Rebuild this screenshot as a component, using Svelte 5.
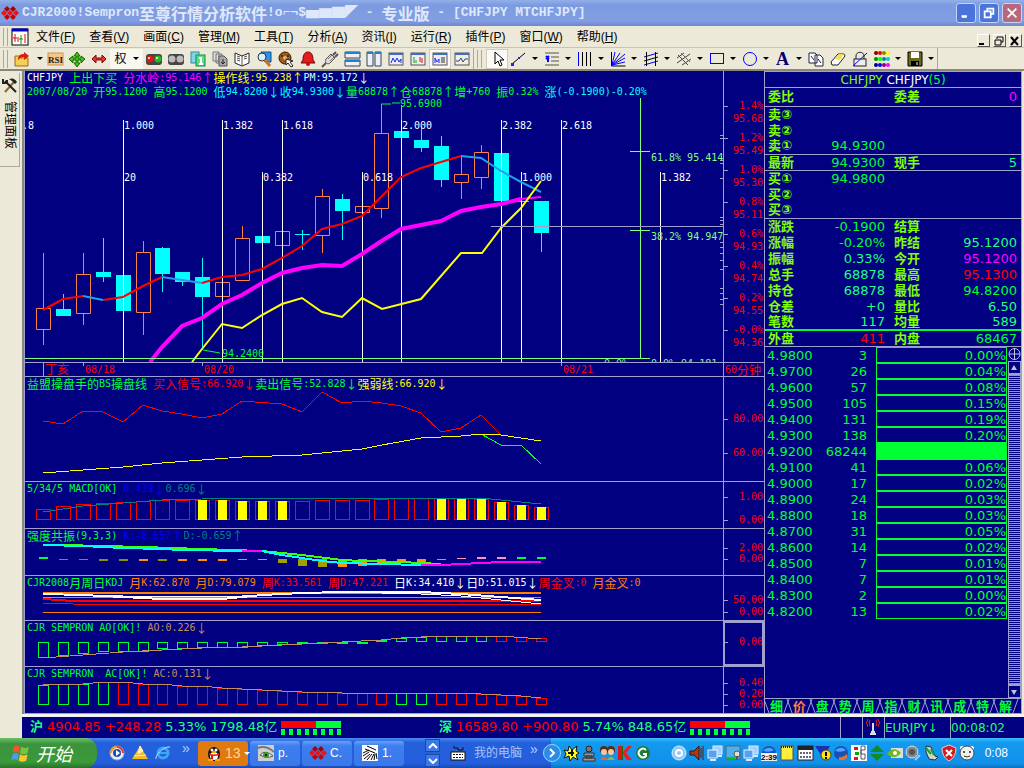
<script>
  // split a label into wide (CJK, arrows) and narrow runs, they use different fonts
  function runs(s) {
    return s.match(/[\u2190-\u21ff\u2e80-\uffef]+|[^\u2190-\u21ff\u2e80-\uffef]+/g) || []
  }
  const isWide = (s) => /[\u2190-\u21ff\u2e80-\uffef]/.test(s)

  const menus = [
    ['文件', 'F'], ['查看', 'V'], ['画面', 'C'], ['管理', 'M'], ['工具', 'T'], ['分析', 'A'],
    ['资讯', 'I'], ['运行', 'R'], ['插件', 'P'], ['窗口', 'W'], ['帮助', 'H'],
  ]

  const win = (inner) => `<rect x="1" y="2" width="14" height="12" fill="#eee" stroke="#555"/><path d="M1 3h14" stroke="#3b6fc4" stroke-width="2"/>${inner}`
  const monitors = '<rect x="6" y="1" width="9" height="8" fill="#9fd0ff" stroke="#dfefff"/><rect x="1" y="5" width="9" height="8" fill="#5aa0ee" stroke="#e4f2ff"/><path d="M3 15h6M10 11h5" stroke="#dce8f5" stroke-width="2"/>'
  const globe = '<circle cx="8" cy="8" r="7" fill="#1850b8"/><path d="M2 6q5-6 11-1-4 3-11 1z" fill="#4fa3ff"/>'
  const gem = (x, y, c) => `<path d="M${x} ${y - 3}l3 3-3 3-3-3z" fill="${c}"/>`

  const icons = {
    open: '<path d="M1 5h5l1 2h7v8H1z" fill="#f6cf52" stroke="#9c6b10"/><path d="M4 9C4 4 7 3 10 3V1l5 4-5 4V6C8 6 6 7 4 9z" fill="#d61d10"/>',
    rsi: '<rect x="1" y="2" width="15" height="12" fill="#f5c68c" stroke="#d09450"/><text x="1" y="12" font-size="9" font-weight="bold" font-family="Liberation Serif" fill="#222">RSI</text>',
    move: '<path d="M8 1l3 4H9v2h3V5l4 3-4 4V9H9v3h2l-3 4-3-4h2V9H4v3L0 8l4-3v2h3V5H5z" fill="#3fc410" stroke="#176400"/>',
    horiz: '<path d="M1 8l4-4v3h6V4l4 4-4 4V9H5v3z" fill="#f03030" stroke="#7c0a0a"/>',
    balls: '<rect x="0" y="3" width="16" height="11" rx="3" fill="#444"/><circle cx="4" cy="8" r="3.5" fill="#e01818"/><circle cx="12" cy="8" r="3.5" fill="#25b825"/><circle cx="3" cy="7" r="1" fill="#fff"/><circle cx="11" cy="7" r="1" fill="#fff"/>',
    balls2: '<rect x="0" y="3" width="16" height="11" rx="3" fill="#444"/><circle cx="4" cy="8" r="3.5" fill="#bbb"/><circle cx="12" cy="8" r="3.5" fill="#bbb"/>',
    pages: '<rect x="1" y="1" width="8" height="11" fill="#7fd4e8" stroke="#2d8ca8"/><rect x="6" y="4" width="9" height="11" fill="#5edc84" stroke="#168a45"/><path d="M9 7h2v6M9 13h4" stroke="#fff" stroke-width="2" fill="none"/>',
    stack: '<path d="M1 1h6v9H1zM4 3h6v9H4z" fill="#ddd" stroke="#777"/><path d="M7 5h5l3 3v7H7z" fill="#aaa" stroke="#555"/><path d="M11 8v5M9 11l2 2 2-2" stroke="#222" fill="none"/>',
    book: '<path d="M1 2l7 3 7-3v10l-7 3-7-3z" fill="#fff" stroke="#222"/><path d="M8 5v10M3 5l3 1M3 7l3 1M3 9l3 1M10 6l3-1M10 8l3-1" stroke="#555"/>',
    find: '<path d="M5 1h10v10h-6z" fill="#2f8fe0" stroke="#124f90"/><circle cx="6" cy="6" r="4" fill="#d9f0ff" stroke="#333"/><path d="M9 9l5 6" stroke="#c8741a" stroke-width="3"/>',
    film: '<circle cx="7" cy="7" r="6" fill="#9a5b1d" stroke="#3a1c00"/><circle cx="7" cy="7" r="2" fill="#f0b050"/><circle cx="4" cy="5" r="1" fill="#222"/><circle cx="10" cy="5" r="1" fill="#222"/><path d="M8 8l7 2-3 1 3 4-2 1-3-4-2 2z" fill="#fff" stroke="#222"/>',
    bell: '<path d="M8 1c4 0 5 4 5 8l2 3H1l2-3c0-4 1-8 5-8z" fill="#e31c1c" stroke="#6d0606"/><circle cx="8" cy="13" r="2" fill="#c80f0f"/>',
    plug: '<path d="M4 8l5-5 4 4-5 5c-2 2-6 0-4-4z" fill="#ddd" stroke="#555"/><path d="M11 4l3-3M13 6l3-3M4 12l-4 4" stroke="#555" stroke-width="2"/><path d="M6 8l4-4M8 10l4-4" stroke="#777"/>',
    rows: '<path d="M1 1h15v6H1zM1 9h15v6H1z" fill="#eef" stroke="#345"/><path d="M1 2h15M1 10h15" stroke="#2a7fc0" stroke-width="2"/>',
    cols: '<path d="M1 1h6v14H1zM9 1h6v14H9z" fill="#eef" stroke="#345"/><path d="M1 2h6M9 2h6" stroke="#2a7fc0" stroke-width="2"/>',
    win1: win('<path d="M3 12l2-5 2 4 2-4 2 4 2-3v4" fill="none" stroke="#22f"/>'),
    win2: win('<path d="M4 6v6M6 9v3" stroke="#0a0"/><path d="M10 6v5M12 7v5" stroke="#e00"/>'),
    win3: win('<path d="M3 12V7l2 4 2-3v4" fill="none" stroke="#22f"/><path d="M9 7h4M9 9h4M9 11h4" stroke="#333"/>'),
    win4: win('<path d="M2 10h3l2-3 2 4 2-3h3" fill="none" stroke="#444"/>'),
    cursor: '<path d="M6 1v12l3-3 2 5 2-1-2-5h4z" fill="#fff" stroke="#000"/>',
    line: '<path d="M1 13L14 2" stroke="#000"/><path d="M0 12h3v3H0zM7 6h2v2H7z" fill="#22f"/>',
    fib: '<path d="M1 2h14M7 6h8M7 10h8M1 14h14" stroke="#555"/><path d="M2 5l3 3M2 8l3-3M4 8v3" stroke="#00f" stroke-width="2"/>',
    vlines: '<path d="M1.5 1v14" stroke="#00f"/><path d="M5.5 1v14M9.5 1v14M13.5 1v14" stroke="#000"/>',
    fan: '<path d="M1.5 1v14h14" fill="none" stroke="#000"/><path d="M2 14L5 1M2 14l8-12M2 14L15 3M2 14l13-7M2 14l13-3" stroke="#00f"/>',
    channel: '<path d="M1 6l14-4M1 14l14-4" stroke="#00f"/><path d="M1 10l14-4M3.5 1v14M12.5 1v14" stroke="#000"/>',
    fork: '<path d="M1 12L14 3M1 7l7-5M6 14l9-6M2 4l10 10" stroke="#444"/><path d="M5 2l9 9" stroke="#666"/>',
    rect: '<rect x="1.5" y="2.5" width="13" height="10" fill="none" stroke="#00f"/>',
    circle: '<circle cx="8" cy="8" r="6.5" fill="none" stroke="#00f"/>',
    letter: '<text x="1" y="14" font-size="18" font-weight="bold" font-family="Liberation Serif" fill="#000070">A</text>',
    copy: '<path d="M1 2h6l2 2v8H1zM7 4h5l3 3v8H7z" fill="#fff" stroke="#224"/><path d="M3 5l3 4M10 8l3 4" stroke="#224"/>',
    eraser: '<path d="M1 11l7-8h6l1 2-7 9H2z" fill="#fff" stroke="#222"/><path d="M5 8l4-5h5l-4 6z" fill="#f4e04c"/>',
    lock: '<path d="M4 8V5c0-5 8-5 8 0v3" fill="none" stroke="#222"/><rect x="2" y="8" width="12" height="7" fill="#eee" stroke="#222"/><path d="M1 15L15 2" stroke="#00f"/>',
    dots: ['#800000', '#e00', '#880', '#ff0', '#080', '#0f0', '#088', '#0cc', '#008', '#00f', '#808', '#f0f']
      .map((c, i) => `<circle cx="${2 + (i % 4) * 4}" cy="${2 + Math.floor(i / 4) * 6}" r="2" fill="${c}"/>`).join(''),
    save: '<path d="M1 1h14v14H1z" fill="#6b6a1c" stroke="#000"/><path d="M4 1h8v6H4z" fill="#fff"/><path d="M4 10h8v5H4z" fill="#000"/><path d="M10 11v3" stroke="#fff"/>',
    logo: gem(5, 4, '#a00') + gem(11, 4, '#a00') + gem(2, 8, '#e11') + gem(8, 8, '#e11') + gem(14, 8, '#e11') + gem(5, 12, '#c00') + gem(11, 12, '#c00'),
    doc: '<rect x="0" y="0" width="16" height="16" fill="#fff" stroke="#000"/><path d="M0 1h16" stroke="#00c" stroke-width="3"/><path d="M3 5v8M1 9h4M6 8v5M13 5v9" stroke="#e00"/><path d="M9 6v9M7 10h4" stroke="#090"/>',
    tools: '<path d="M3 15L12 5" stroke="#8a6a20" stroke-width="2"/><path d="M7 2q5-2 8 3l-2 2-3-3z" fill="#222"/><path d="M3 4l11 11" stroke="#222" stroke-width="2"/><path d="M1 2v4h4V3" fill="none" stroke="#222" stroke-width="2"/>',
    flag: '<path d="M3 3q3-2 5 0L7 8Q4 6 2 8z" fill="#f0552b"/><path d="M9 3q3 2 6 0l-1 5q-3 2-6 0z" fill="#7fc241"/><path d="M2 9q3-2 5 0l-1 5q-3-2-5 0z" fill="#4f9be8"/><path d="M8 9q3 2 6 0l-1 5q-3 2-6 0z" fill="#fcc72c"/>',
    media: '<circle cx="8" cy="8" r="7" fill="#e8f0fa" stroke="#9ab"/><path d="M8 2a6 6 0 016 6" stroke="#e33" stroke-width="2" fill="none"/><path d="M2 8a6 6 0 016-6" stroke="#f90" stroke-width="2" fill="none"/><circle cx="8" cy="8" r="4" fill="#1c4fb0"/><path d="M7 5l4 3-4 3z" fill="#fff"/>',
    tri: '<path d="M8 1l8 13H0z" fill="#f5b921"/><path d="M8 1l3 5-5 3zM2 11l12-1" fill="#fff3b8" stroke="#fff3b8"/>',
    ie: '<circle cx="8" cy="8" r="5" fill="none" stroke="#39a7f3" stroke-width="3"/><path d="M4 8h9" stroke="#39a7f3" stroke-width="2"/><path d="M1 14C0 10 9 1 15 2" fill="none" stroke="#bfe4ff"/>',
    qq: '<ellipse cx="8" cy="9" rx="6" ry="7" fill="#111"/><ellipse cx="8" cy="11" rx="4" ry="4" fill="#fff"/><circle cx="6" cy="5" r="1.5" fill="#fff"/><circle cx="10" cy="5" r="1.5" fill="#fff"/><path d="M3 8q5 3 10 0v2q-5 2-10 0z" fill="#e11"/><path d="M6 10v4" stroke="#e11" stroke-width="2"/><path d="M2 15h5M9 15h5M6 7h4" stroke="#fa0" stroke-width="2"/>',
    eye: '<rect width="16" height="16" fill="#cfcfcf"/><path d="M0 3q8-3 16 4" stroke="#777" stroke-width="2" fill="none"/><path d="M2 10q5-6 13 1-6 3-13-1z" fill="#eee" stroke="#555"/><circle cx="8" cy="10" r="3" fill="#3a9a2a"/><circle cx="8" cy="10" r="1" fill="#000"/>',
    zebra: '<rect width="16" height="16" fill="#fff"/><path d="M5 1l9 4M3 4l10 4M1 8l6-3M1 11l6-4M2 14l6-5M5 15l5-6M9 15l3-6M12 15l1-6M15 14l-1-6" stroke="#000"/>',
    keyboard: '<path d="M4 1v2h4v2h5V2" fill="none" stroke="#111"/><rect x="1" y="7" width="14" height="8" fill="#fff" stroke="#111"/><path d="M3 9.5h10M3 12.5h10" stroke="#111" stroke-dasharray="2 1"/>',
    burst: '<path d="M1 5l4 1 1-5 3 4 5-4-1 5 3 2-3 2 2 5-5-3-3 4-1-5-5 2 2-4z" fill="#ff2" stroke="#111"/><path d="M5 8h6M9 5v6" stroke="#111" stroke-width="2"/>',
    robot: '<circle cx="8" cy="4" r="3" fill="#777" stroke="#222"/><path d="M3 8h10v3H3zM5 11h6v2H5zM2 13h12v3H2z" fill="#999" stroke="#333"/>',
    people: '<circle cx="5" cy="5" r="4" fill="#582c12"/><circle cx="5" cy="7" r="3" fill="#f4c7a0"/><path d="M1 15q4-7 8 0z" fill="#e6652c"/><circle cx="12" cy="5" r="4" fill="#582c12"/><circle cx="12" cy="7" r="3" fill="#f4c7a0"/><path d="M8 15q4-7 8 0z" fill="#7fbc3c"/>',
    kred: '<path d="M2 1h4v14H2z" fill="#1a6a10"/><path d="M6 7l5-6h4l-6 7 6 7h-5L6 9z" fill="#f21a1a"/><path d="M1 1h4v14H1z" fill="#e01515"/>',
    green: '<circle cx="8" cy="8" r="7" fill="#1e7c33"/><path d="M11 5Q8 2 5 5t0 6 6 0V9H8" fill="none" stroke="#fff" stroke-width="2"/>',
    ring: '<circle cx="8" cy="8" r="7" fill="#8fc8f7" stroke="#d6ecff"/><circle cx="8" cy="8" r="3" fill="none" stroke="#fff" stroke-width="2"/>',
    horn: '<path d="M1 6h4l5-5v14l-5-5H1z" fill="#a33a1a" stroke="#3c1206"/><path d="M12 3v10M14 1v14" stroke="#5c1b0a"/>',
    monitors,
    probe: '<rect x="1" y="1" width="14" height="13" fill="#4cb1ee" stroke="#567"/><path d="M2 13h8" stroke="#0c0" stroke-width="2"/><circle cx="12" cy="9" r="3" fill="#ddd" stroke="#555"/><path d="M12 11v4" stroke="#555" stroke-width="2"/>',
    clock: globe + '<rect x="0" y="8" width="16" height="8" fill="#eee"/><text x="0" y="15" font-size="8" font-weight="bold" font-family="Liberation Sans" fill="#000">2:39</text>',
    note: '<rect x="2" y="1" width="12" height="14" fill="#ffef3c" stroke="#554"/><path d="M2 2h12" stroke="#222" stroke-width="2" stroke-dasharray="1 1"/>',
    calendar: '<rect x="1" y="1" width="15" height="14" fill="#fff" stroke="#222"/><path d="M1 3h15" stroke="#222" stroke-width="4"/><path d="M3 8h11M3 12h11" stroke="#667" stroke-dasharray="2 1" stroke-width="2"/>',
    warn: '<path d="M0 1h15L8 13z" fill="#1a2fb8"/><circle cx="11" cy="10" r="5" fill="#ffe21c" stroke="#554400"/><path d="M11 7v4M11 12v2" stroke="#000" stroke-width="2"/>',
    globe: globe + '<path d="M6 12q4 1 8-3v4q-3 3-8 2z" fill="#e8742a"/>',
    kline: '<rect width="16" height="16" fill="#fff"/><path d="M5 2v3M5 12v3" stroke="#e11" stroke-width="4"/><path d="M6 7v3" stroke="#0a0" stroke-width="4"/><path d="M10 1h4v4h-4v4h4v5h-4z" fill="none" stroke="#556"/>',
    diamond: '<path d="M8 0l7 7H1zM1 9h14l-7 7z" fill="#128a26"/>',
    nvidia: '<rect x="4" y="3" width="12" height="10" fill="#ddd"/><path d="M0 9q6-9 14-1-7 8-14 1z" fill="#78b51c"/><circle cx="8" cy="8" r="2" fill="#fff"/>',
    speaker: '<circle cx="7" cy="7" r="6" fill="#888" stroke="#ddd"/><circle cx="7" cy="7" r="3" fill="#555"/><path d="M10 15l5-5" stroke="#9cf" stroke-width="2"/>',
    phone: '<path d="M3 1l5 1 4 9 3 1-3 3-6-1-3-7z" fill="#ccd6cc" stroke="#234"/><path d="M3 3l5 6M8 4l3 6" stroke="#1b9b2d" stroke-width="2"/>',
    shield: '<path d="M8 0l7 3q0 9-7 13Q1 12 1 3z" fill="#d01c1c" stroke="#f6c9c9"/><path d="M5 5l6 6M11 5l-6 6" stroke="#fff" stroke-width="2"/>',
    bear: '<circle cx="3" cy="3" r="2" fill="#fff"/><circle cx="13" cy="3" r="2" fill="#fff"/><circle cx="8" cy="8" r="7" fill="#eef2ea" stroke="#445"/><circle cx="5" cy="7" r="1" fill="#222"/><circle cx="11" cy="7" r="1" fill="#222"/><path d="M5 11q3 2 6 0" fill="none" stroke="#333"/>',
    tower: '<path d="M5 7Q3 4 5 1M11 7q2-3 0-6M3 8Q0 4 3 0M13 8q3-4 0-8" fill="none" stroke="#e22"/><path d="M8 4v8M6 13h4M5 15h6" stroke="#ddd" stroke-width="2"/>',
  }

  const toolsLeft = ['rsi', 'move', 'horiz']
  const toolsMid = ['balls', 'balls2', 'pages', 'stack', 'book', 'find', 'film', 'bell', 'plug', 'rows', 'cols', 'win1', 'win2', 'win3', 'win4']
  const drawTools = ['line', 'fib', 'vlines', 'fan', 'channel', 'fork', 'rect', 'circle', 'letter']
  const trayLeft = ['burst', 'robot', 'people', 'kred', 'green']
  const trayRight = ['ring', 'horn', 'monitors', 'probe', 'monitors', 'clock', 'note', 'calendar', 'warn', 'globe', 'kline', 'diamond', 'nvidia', 'speaker', 'phone', 'shield', 'bear']

  const G = '#00ff32', R = '#ff0000', O = '#ff8040', C = '#00ffff', Y = '#ffff00'
  const M = '#ff00ff', W = '#ffffff', T = '#008080', L = '#80ff80', A = '#ff8000', B = '#c09060', K = '#20ff80'

  const priceLabels = [
    [['CHFJPY ', W], ['上出下买 ', G], ['分水岭:95.146↑', M], ['操作线:95.238↑', Y], ['PM:95.172↓', '#d0ffff']],
    [['2007/08/20 开95.1200 高95.1200 ', G], ['低94.8200↓收94.9300↓', C], ['量68878↑仓68878↑增+760 振0.32% ', G], ['涨(-0.1900)-0.20%', C]],
  ]

  // x, high, low, body top, body bottom, rising
  const candles = [
    [43, 253, 345, 308, 329, 1], [63, 294, 316, 309, 316, 0], [83, 253, 325, 274, 313, 1],
    [103, 238, 282, 272, 277, 0], [123, 275, 311, 275, 311, 0], [143, 241, 335, 252, 312, 1],
    [162, 247, 292, 248, 274, 0], [182, 272, 286, 272, 282, 0], [202, 258, 347, 277, 297, 0],
    [222, 282, 296, 282, 296, 1], [242, 226, 280, 238, 280, 1], [262, 236, 243, 236, 243, 0],
    [282, 231, 245, 231, 245, 1], [302, 230, 250, 234, 235, 0], [322, 189, 253, 196, 235, 1],
    [342, 194, 240, 199, 211, 0], [362, 206, 212, 206, 212, 1], [381, 104, 218, 133, 208, 1],
    [401, 105, 138, 131, 138, 0], [421, 126, 152, 140, 148, 0], [441, 136, 187, 146, 180, 0],
    [461, 155, 199, 174, 182, 1], [481, 145, 189, 152, 177, 1], [501, 153, 201, 153, 201, 0],
    [521, 201, 202, 201, 202, 0], [541, 201, 252, 201, 233, 0],
  ]
  const priceLines = [
    [R, 2, '43,310 63,299 83,296'], ['#209ef0', 2, '83,296 103,300'],
    [R, 2, '103,300 123,297 143,286 162,277'], ['#209ef0', 2, '162,277 182,280 202,283'],
    [R, 2, '202,283 222,277 242,275 262,269 282,258 302,246 322,229 342,224 362,216 380,198 401,177 421,168 441,162 461,156'],
    ['#209ef0', 2, '461,156 481,158 501,171 521,182 541,192'],
    [M, 4, '150,362 162,347 182,326 202,318 222,304 242,295 262,283 282,273 302,268 322,265 342,266 362,254 380,242 401,229 441,221 461,211 481,207 501,204 521,199'],
    [M, 2, '521,199 541,197'],
    [Y, 2, '192,362 202,349 222,324 242,328 262,315 282,304 302,298 322,312 342,317 362,298 382,309 421,299 461,253 482,253 501,228 521,208 541,181'],
  ]
  const fibTop = [[123, '1.000'], [222, '1.382'], [282, '1.618'], [401, '2.000'], [501, '2.382'], [561, '2.618']]
  const fibLow = [[262, '0.382'], [362, '0.618'], [521, '1.000'], [660, '1.382']]
  const volumeTicks = [135, 138, 160, 163, 178, 217, 220, 224, 242, 247, 253, 260, 269, 288, 293, 299, 304]
  const priceAxis = [
    ['1.4%', '95.68'], ['1.2%', '95.49'], ['1.0%', '95.30'], ['0.8%', '95.11'],
    ['0.6%', '94.93'], ['0.4%', '94.74'], ['0.2%', '94.55'], ['-0.0%', '94.36'],
  ]

  const xs = candles.map((c) => c[0])
  const macdTops = [509, 506, 504, 503, 502, 501, 500, 500, 500, 500, 501, 501, 501, 501, 500, 500, 500, 499, 498, 498, 498, 498, 499, 502, 505, 507]
  const macdFill = [8, 9, 10, 11, 12, 20, 21, 22, 23, 24, 25]
  const aoEnds = [657, 655, 653, 651, 651, 651, 648, 648, 647, 647, 647, 645, 644, 643, 643, 643, 643, 640, 638, 637, 636, 636, 636, 636, 637, 638]
  const acTops = [685, 684, 684, 682, 682, 684, 684, 686, 686, 688, 689, 690, 691, 692, 692, 693, 693, 693, 693, 693, 693, 693, 694, 695, 696, 698]
  // top, height, colour of the resonance marks
  const marks = [
    [557, 2, G], [559, 1, '#909000'], [559, 1, '#909000'], [559, 2, '#909000'], [559, 2, '#909000'], [559, 2, '#ff9010'],
    [559, 2, '#909000'], [559, 2, '#ff9010'], [559, 2, '#ff9010'], [559, 2, '#ff9010'], [559, 1, '#ff9010'], [559, 1, '#ff9010'],
    [559, 4, '#a0a000'], [559, 7, '#a0a000'], [559, 8, '#a0a000'], [559, 8, '#ff9010'], [559, 7, '#ff9010'], [559, 4, '#ff9010'],
    [559, 3, '#ff9010'], [559, 3, '#ff9010'], [559, 1, '#ff9010'], [558, 1, '#ff90c0'], [557, 2, '#ff90c0'], [557, 2, '#ff90c0'],
    [557, 2, G], [557, 2, G],
  ]

  const box = (x, y0, y1, w, c) => ({ x: x - w / 2, y: Math.min(y0, y1), w, h: Math.max(1, Math.abs(y1 - y0)), c })
  const panels = [
    {
      y: 376, h: 105,
      label: [['益盟操盘手的BS操盘线 ', G], ['买入信号:66.920↓', R], ['卖出信号:52.828↓', G], ['强弱线:66.920↓', Y]],
      boxes: [], fills: [],
      lines: [
        [R, 1, '43,421 63,424 83,411 103,412 123,422 143,405 162,411 182,414 202,418 222,414 242,401 282,404 302,412 322,392 342,403 362,401 382,403 401,406 421,413 441,432 461,428 481,415 501,435'],
        [G, 1, '481,434 501,445 521,445 541,464'],
        [Y, 1, '43,473 83,470 123,467 162,463 202,460 242,457 302,455 342,451 362,449 382,445 421,438 461,436 481,434 501,435 541,441'],
      ],
      axis: [[419, '80.00'], [453, '60.00']],
    },
    {
      y: 481, h: 47,
      label: [['5/34/5 MACD[OK] ', G], ['0.439↓', '#0000ff'], ['0.696↓', T]],
      boxes: xs.map((x, i) => box(x, macdTops[i], 519, 14, R)),
      fills: macdFill.map((i) => box(xs[i], macdTops[i], 520, 9, Y)),
      lines: [[T, 1, '43,512 83,506 123,503 162,500 202,499 441,498 481,498 501,500 541,504']],
      axis: [[497, '1.00'], [520, '0.00']],
    },
    {
      y: 528, h: 47,
      label: [['强度共振(9,3,3) ', G], ['K:-0.557↑', '#0000ff'], ['D:-0.659↑', T]],
      boxes: [],
      fills: xs.map((x, i) => ({ x: x - 4, y: marks[i][0], w: 9, h: marks[i][1], c: marks[i][2] })),
      lines: [
        ['#40ff00', 2, '63,545 103,546 143,547 202,549 262,551 282,553 302,555 342,560 362,561 401,562 421,563 441,564'],
        [C, 2, '43,545 83,546 123,548 162,549 182,550 242,551 262,551 282,555 302,558 322,561 342,563 380,564 421,565'],
        [M, 2, '242,551 262,551'],
        [M, 2, '421,565 441,565 461,564 501,562 541,562'],
      ],
      axis: [[548, '2.00'], [559, '0.00']],
    },
    {
      y: 575, h: 45,
      label: [['CJR2008月周日KDJ ', G], ['月K:62.870 月D:79.079 ', A], ['周K:33.561 周D:47.221 ', R], ['日K:34.410↓日D:51.015↓', W], ['周金叉:0 ', R], ['月金叉:0', A]],
      boxes: [], fills: [],
      lines: [
        [A, 2, '43,593 541,593'], [A, 1, '43,597 541,597'], [A, 1, '43,612 541,612'],
        [R, 2, '43,599 73,601 541,601'], [R, 1, '43,603 73,604 541,604'],
        [W, 2, '43,594 83,595 123,597 162,599 222,599 262,595 302,593 342,592 421,592 461,594 501,597 541,600'],
        [W, 1, '43,594 123,596 182,597 242,596 282,594 342,592 421,594 461,596 501,600 541,604'],
      ],
      axis: [[600, '50.00'], [612, '0.00']],
    },
    {
      y: 620, h: 46, active: true,
      label: [['CJR SEMPRON AO[OK]! ', G], ['AO:0.226↓', B]],
      boxes: xs.map((x, i) => box(x, aoEnds[i], i > 16 ? 641 : 642, 10, i > 22 ? R : G)), fills: [],
      lines: [[B, 1, '43,658 83,655 123,652 162,650 202,648 242,647 302,644 342,642 381,640 401,638 441,636 501,636 541,639']],
      axis: [[642, '0.00']],
    },
    {
      y: 666, h: 47,
      label: [['CJR SEMPRON  AC[OK]! ', G], ['AC:0.131↓', B]],
      boxes: xs.map((x, i) => box(x, acTops[i], 704, 10, i < 4 || i === 18 || i === 19 ? G : R)), fills: [],
      lines: [[B, 1, xs.map((x, i) => `${x},${acTops[i]}`).join(' ')]],
      axis: [[683, '0.40'], [694, '0.20'], [705, '0.00']],
    },
  ]

  // label, value, colour, label, value, colour, class
  const quotes = [
    ['委比', '', G, '委差', '0', M, 'tall line'],
    ['卖③', '', G, '', '', G, ''], ['卖②', '', G, '', '', G, ''], ['卖①', '94.9300', G, '', '', G, 'line'],
    ['最新', '94.9300', G, '现手', '5', K, 'line'],
    ['买①', '94.9800', G, '', '', G, ''], ['买②', '', G, '', '', G, ''], ['买③', '', G, '', '', G, 'line'],
    ['涨跌', '-0.1900', G, '结算', '', G, ''], ['涨幅', '-0.20%', G, '昨结', '95.1200', K, ''],
    ['振幅', '0.33%', K, '今开', '95.1200', M, ''], ['总手', '68878', K, '最高', '95.1300', R, ''],
    ['持仓', '68878', K, '最低', '94.8200', G, ''], ['仓差', '+0', K, '量比', '6.50', K, ''],
    ['笔数', '117', K, '均量', '589', K, 'green'], ['外盘', '411', R, '内盘', '68467', G, 'line'],
  ]
  const depth = [
    ['4.9800', 3, '0.00%'], ['4.9700', 26, '0.04%'], ['4.9600', 57, '0.08%'], ['4.9500', 105, '0.15%'],
    ['4.9400', 131, '0.19%'], ['4.9300', 138, '0.20%'], ['4.9200', 68244, ''], ['4.9100', 41, '0.06%'],
    ['4.9000', 17, '0.02%'], ['4.8900', 24, '0.03%'], ['4.8800', 18, '0.03%'], ['4.8700', 31, '0.05%'],
    ['4.8600', 14, '0.02%'], ['4.8500', 7, '0.01%'], ['4.8400', 7, '0.01%'], ['4.8300', 2, '0.00%'], ['4.8200', 13, '0.02%'],
  ]
  const indexes = [
    ['沪', '4904.85', '+248.28', '5.33%', '1798.48亿'],
    ['深', '16589.80', '+900.80', '5.74%', '848.65亿'],
  ]
  const tabs = '细价盘势周指财讯成特解'.split('')
  let tab = $state('价')
</script>

{#snippet icon(name)}
  <svg class="icon" viewBox="0 0 16 16" width="16" height="16" aria-hidden="true">{@html icons[name]}</svg>
{/snippet}

{#snippet mixed(text)}{#each runs(text) as r}<span class:wide={isWide(r)}>{r}</span>{/each}{/snippet}

<div class="app">
  <header class="titlebar">
    {@render icon('logo')}
    <h1>{@render mixed('CJR2000!Sempron至尊行情分析软件!o⌐¬$▅▆▇◤ - 专业版 - [CHFJPY MTCHFJPY]')}</h1>
    <div class="winbtns">
      <button aria-label="最小化"><svg viewBox="0 0 16 16"><path d="M3 12h6" stroke="#fff" stroke-width="3" /></svg></button>
      <button aria-label="还原"><svg viewBox="0 0 16 16"><path d="M6 6V3h7v6h-3M3 6h7v7H3z" fill="none" stroke="#fff" stroke-width="2" /></svg></button>
      <button class="close" aria-label="关闭"><svg viewBox="0 0 16 16"><path d="M3 3l10 10M13 3L3 13" stroke="#fff" stroke-width="2" /></svg></button>
    </div>
  </header>

  <nav class="menubar">
    <span class="grip"></span>
    {@render icon('doc')}
    <div class="menus">
      {#each menus as [name, key]}
        <button>{name}(<u>{key}</u>)</button>
      {/each}
    </div>
    <div class="mdi">
      <button aria-label="最小化窗口"><svg viewBox="0 0 10 10"><path d="M1 8h5" stroke="#000" stroke-width="2" /></svg></button>
      <button aria-label="还原窗口"><svg viewBox="0 0 10 10"><path d="M3 3V1h6v5H7M1 4h6v5H1z" fill="none" stroke="#000" /></svg></button>
      <button aria-label="关闭窗口"><svg viewBox="0 0 10 10"><path d="M1 1l7 8M8 1L1 9" stroke="#000" stroke-width="2" /></svg></button>
    </div>
  </nav>

  <div class="toolbar">
    <div class="toolgroup">
      <span class="grip"></span>
      <button class="tool first" aria-label="打开">{@render icon('open')}<i class="drop"></i></button>
      {#each toolsLeft as t}<button class="tool" aria-label={t}>{@render icon(t)}</button>{/each}
      <button class="tool right">权<i class="drop"></i></button>
      {#each toolsMid as t}<button class="tool" class:on={t === 'win3'} aria-label={t}>{@render icon(t)}</button>{/each}
    </div>
    <div class="toolgroup">
      <span class="grip"></span>
      <button class="tool on" aria-label="选择">{@render icon('cursor')}</button>
      {#each drawTools as t}<button class="tool split" aria-label={t}>{@render icon(t)}<i class="drop"></i></button>{/each}
      <button class="tool" aria-label="复制">{@render icon('copy')}</button>
      <button class="tool" aria-label="擦除">{@render icon('eraser')}</button>
      <button class="tool" aria-label="锁定">{@render icon('lock')}</button>
      <button class="tool split" aria-label="颜色">{@render icon('dots')}<i class="drop"></i></button>
      <button class="tool split" aria-label="保存">{@render icon('save')}<i class="drop"></i></button>
    </div>
  </div>

  <div class="body">
    <aside class="side">
      <button class="sidetab">{@render icon('tools')}<span>管理面板</span></button>
    </aside>

    <div class="work">
      <main class="main">
        <div class="charts">
          <section class="panel price">
            <div class="label">
              {#each priceLabels as row}
                <p>{#each row as [t, c]}<span style:color={c}>{@render mixed(t)}</span>{/each}</p>
              {/each}
            </div>
            <svg class="plot" height="291">
              <g transform="translate(-25,-71)">
                {#each candles as [x, hi, lo, top, bot, up]}
                  {#if up}
                    <path d="M{x}.5 {hi}V{top}M{x}.5 {bot}V{lo}M{x - 7}.5 {top}.5h14V{bot}.5h-14z" fill="none" stroke={O} />
                  {:else}
                    <path d="M{x}.5 {hi}V{lo}" stroke={C} />
                    <rect x={x - 7} y={top} width="15" height={bot - top} fill={C} />
                  {/if}
                {/each}
                {#each fibTop as [x, t]}
                  <path d="M{x}.5 120V362" stroke={W} />
                  <text x={x + 1} y="129" fill={W}>{t}</text>
                {/each}
                {#each fibLow as [x, t]}
                  <path d="M{x}.5 172V362" stroke={W} />
                  <text x={x + 1} y="181" fill={W}>{t}</text>
                {/each}
                <text x="22" y="129" fill={W}>.8</text>
                <text x="124" y="181" fill={W}>20</text>
                {#each priceLines as [c, w, p]}
                  <polyline points={p} fill="none" stroke={c} stroke-width={w} />
                {/each}
                <path d="M24 358.5H650M640.5 98V358M630 151.5h20M630 230.5h20" stroke={L} />
                <path d="M491 226.5H2000" stroke="#a0a0d0" />
                {#each volumeTicks as y}<path d="M720 {y}.5h3" stroke="#a0a0d0" />{/each}
                <text x="651" y="161" fill={L}>61.8% 95.414</text>
                <text x="651" y="240" fill={L}>38.2% 94.947</text>
                <text x="604" y="367" fill={L}>0.0%</text>
                <text x="651" y="367" fill={L}>0.0% 94.181</text>
                <path d="M381 104h10M392 103h8M203 350l17 3" stroke={G} />
                <text x="400" y="107" fill={G}>95.6900</text>
                <text x="222" y="357" fill={G}>94.2400</text>
              </g>
            </svg>
            <svg class="axis" height="291">
              <g transform="translate(-723,-71)">
                {#each priceAxis as [pct, val], i}
                  <path d="M723 {106 + i * 32}.5h4" stroke="#a0a0d0" />
                  <text x="762" y={109 + i * 32} text-anchor="end" fill={R}>{pct}</text>
                  <text x="762" y={122 + i * 32} text-anchor="end" fill={R}>{val}</text>
                {/each}
              </g>
            </svg>
          </section>

          <section class="panel dates">
            <svg class="plot" height="13">
              <path d="M18.5 0v13M58.5 0v3M177.5 0v3M536.5 0v3" stroke="#a0a0d0" />
              <text class="cjk" x="20" y="11" fill={R}>丁亥</text>
              <text x="60" y="10" fill={R}>08/18</text>
              <text x="179" y="10" fill={R}>08/20</text>
              <text x="538" y="10" fill={R}>08/21</text>
            </svg>
            <div class="axis period">{@render mixed('60分钟')}</div>
          </section>

          {#each panels as p}
            <section class="panel">
              <div class="label"><p>{#each p.label as [t, c]}<span style:color={c}>{@render mixed(t)}</span>{/each}</p></div>
              <svg class="plot" height={p.h - 1}>
                <g transform="translate(-25,{-p.y - 1})" shape-rendering="crispEdges">
                  {#each p.boxes as b}<rect x={b.x + 0.5} y={b.y + 0.5} width={b.w} height={b.h} fill="none" stroke={b.c} />{/each}
                  {#each p.fills as f}<rect x={f.x} y={f.y} width={f.w} height={f.h} fill={f.c} />{/each}
                  {#each p.lines as [c, w, pts]}<polyline points={pts} fill="none" stroke={c} stroke-width={w} />{/each}
                </g>
              </svg>
              <svg class="axis" class:active={p.active} height={p.h - 1}>
                <g transform="translate(-723,{-p.y - 1})">
                  {#each p.axis as [y, t]}
                    <path d="M723 {y}.5h4" stroke="#a0a0d0" />
                    <text x="762" y={y + 3} text-anchor="end" fill={R}>{t}</text>
                  {/each}
                </g>
              </svg>
            </section>
          {/each}
        </div>

        <div class="quote">
          <h2><span>CHFJPY</span> <b>CHFJPY</b><em>(5)</em></h2>
          <table class="quotes">
            <colgroup><col class="c1" /><col class="c2" /><col class="c3" /><col /></colgroup>
            <tbody>
              {#each quotes as [l1, v1, c1, l2, v2, c2, cls]}
                <tr class={cls}>
                  <th>{l1}</th><td style:color={c1}>{v1}</td>
                  <th>{l2}</th><td style:color={c2}>{v2}</td>
                </tr>
              {/each}
            </tbody>
          </table>
          <div class="depthwrap">
            <table class="depth">
              <colgroup><col class="d1" /><col class="d2" /><col /></colgroup>
              <tbody>
                {#each depth as [price, vol, pct]}
                  <tr><td class="px">{price}</td><td class="vol">{vol}</td><td class="bar"><div class:full={!pct}>{pct}</div></td></tr>
                {/each}
              </tbody>
            </table>
            <div class="scroll">
              <svg width="13" height="14" viewBox="0 0 13 14"><path d="M6.5 1v12M1 7h11" stroke="#c0c0e8" /><circle cx="6.5" cy="7" r="5.5" fill="none" stroke="#c0c0e8" /></svg>
              <button aria-label="向上"><svg viewBox="0 0 9 9" width="9" height="9"><path d="M4 2l3 5H1z" fill="#c0c0e8" /></svg></button>
              <div class="track"></div>
              <button aria-label="向下"><svg viewBox="0 0 9 9" width="9" height="9"><path d="M4 8l3-5H1z" fill="#c0c0e8" /></svg></button>
            </div>
          </div>
          <div class="tabs">
            {#each tabs as t}<button class:sel={tab === t} onclick={() => (tab = t)}>{t}</button>{/each}
          </div>
        </div>
      </main>

      <footer class="status">
        {#each indexes as [name, value, diff, pct, amount]}
          <div class="index">
            <span class="k name">{name}</span><span class="r">{value}</span><span class="r">{diff}</span><span class="k">{pct}</span><span class="k">{amount}</span>
            <span class="gauge"></span>
          </div>
        {/each}
        <span class="cell small"></span>
        <span class="cell small">{@render icon('tower')}</span>
        <span class="cell pair">EURJPY↓</span>
        <span class="cell time">00:08:02</span>
      </footer>
    </div>
  </div>

  <footer class="taskbar">
    <button class="start"><svg viewBox="0 0 16 16" width="20" height="20">{@html icons.flag}</svg>开始</button>
    <div class="quick">{@render icon('media')}{@render icon('tri')}{@render icon('ie')}<span>»</span></div>
    <button class="task hot">{@render icon('qq')}13<i class="drop"></i></button>
    <button class="task">{@render icon('eye')}p.</button>
    <button class="task">{@render icon('logo')}C.</button>
    <button class="task">{@render icon('zebra')}1.</button>
    <div class="spin">
      <button aria-label="上一页"><svg viewBox="0 0 10 6" width="10" height="6"><path d="M1 5l4-4 4 4" fill="none" stroke="#fff" stroke-width="2" /></svg></button>
      <button aria-label="下一页"><svg viewBox="0 0 10 6" width="10" height="6"><path d="M1 1l4 4 4-4" fill="none" stroke="#fff" stroke-width="2" /></svg></button>
    </div>
    {@render icon('keyboard')}
    <a class="desk" href="#top">我的电脑</a>
    <span class="more">»</span>
    <div class="tray">
      <button class="expand" aria-label="展开"><svg viewBox="0 0 16 16" width="16" height="16"><path d="M6 4l4 4-4 4" fill="none" stroke="#fff" stroke-width="2" /></svg></button>
      {#each trayLeft as t}{@render icon(t)}{/each}
      <span class="space"></span>
      {#each trayRight as t}{@render icon(t)}{/each}
      <time>0:08</time>
    </div>
  </footer>
</div>

<style>
  :global(body) { margin: 0; background: #ece9d8; }
  * { box-sizing: border-box; }
  button {
    font: inherit;
    color: inherit;
    background: none;
    border: 0;
    padding: 0;
    margin: 0;
  }
  p, h1, h2 { margin: 0; font-weight: normal; }
  .icon { flex-shrink: 0; display: block; overflow: visible; }

  .app {
    --navy: #000080;
    --rule: #a0a0d0;
    --mono: "DejaVu Sans Mono", "Noto Sans CJK SC", monospace;
    --cjk: "Noto Sans CJK SC", sans-serif;
    display: flex;
    flex-direction: column;
    min-height: 100vh;
    background: #ece9d8;
    font: 12px/16px "Liberation Sans", "Noto Sans CJK SC", sans-serif;
  }
  .wide { font-family: var(--cjk); font-size: 12px; }

  .titlebar {
    display: flex;
    align-items: center;
    gap: 4px;
    height: 26px;
    padding: 0 2px;
    color: #dfe8fb;
    background: linear-gradient(#93b0e8, #7b9ae0 20%, #829fe4 80%, #6f86cc);
  }
  .titlebar h1 {
    display: flex;
    align-items: center;
    flex: 1;
    font: bold 13px/24px "Liberation Mono", "Noto Sans CJK SC", monospace;
    white-space: pre;
  }
  .titlebar .wide { font-size: 16px; }
  .winbtns { display: flex; gap: 3px; }
  .winbtns button {
    width: 20px;
    height: 20px;
    border: 1px solid #c8d4f4;
    border-radius: 3px;
    background: #4a74dc;
  }
  .winbtns .close { background: #b8687c; }
  .winbtns svg { display: block; width: 14px; height: 14px; margin: 2px; }

  .menubar { display: flex; align-items: center; height: 21px; }
  .grip {
    width: 5px;
    height: 18px;
    margin: 0 4px 0 3px;
    flex-shrink: 0;
    border-left: 1px solid #aca899;
    border-right: 1px solid #aca899;
  }
  .menus { display: flex; flex: 1; gap: 14px; margin-left: 8px; }
  .menus button { white-space: nowrap; }
  .mdi { display: flex; gap: 3px; align-self: flex-end; padding-right: 2px; }
  .mdi button {
    width: 13px;
    height: 13px;
    border: 1px solid;
    border-color: #fff #555 #555 #fff;
  }
  .mdi svg { display: block; width: 10px; height: 10px; }

  .toolbar {
    display: flex;
    height: 24px;
    border-top: 1px solid #c8c4b4;
    border-bottom: 2px solid #8a8878;
  }
  .toolgroup { display: flex; align-items: center; border-right: 1px solid #aca899; }
  .tool {
    display: flex;
    align-items: center;
    justify-content: center;
    width: 22px;
    height: 20px;
    flex-shrink: 0;
  }
  .tool.first { width: 32px; gap: 7px; }
  .tool.split { width: 33px; gap: 5px; }
  .tool.right { width: 33px; gap: 6px; background: #f8f7f0; }
  .tool.on { background: #fbfaf6; border: 1px solid #d0ccbc; }
  .drop {
    border: 3px solid transparent;
    border-top-color: #000;
    border-bottom: 0;
  }

  .body { display: flex; flex: 1; }
  .side { width: 22px; flex-shrink: 0; padding-top: 2px; }
  .sidetab {
    display: flex;
    flex-direction: column;
    align-items: center;
    gap: 8px;
    width: 20px;
    height: 94px;
    padding-top: 4px;
    border: solid #aca899;
    border-width: 0 1px 1px 0;
  }
  .sidetab span { writing-mode: vertical-rl; text-orientation: sideways; }
  .work { display: flex; flex-direction: column; flex: 1; min-width: 0; }
  .main {
    display: flex;
    flex: 1;
    margin-right: 2px;
    border-left: 2px solid #8a8878;
    background: var(--navy);
  }

  .charts {
    flex: 1;
    min-width: 0;
    border: 1px solid var(--rule);
    border-width: 0 1px 1px;
  }
  .panel {
    position: relative;
    display: flex;
    border-top: 1px solid var(--rule);
  }
  .panel.price { border-top: 0; }
  .plot { display: block; flex: 1; min-width: 0; overflow: hidden; }
  .axis { display: block; width: 41px; flex-shrink: 0; border-left: 1px solid var(--rule); }
  .axis.active { outline: 2px solid var(--rule); outline-offset: -2px; }
  .panel text, .label, .period { font-family: var(--mono); font-size: 10px; }
  .panel .cjk { font-family: var(--cjk); font-size: 12px; }
  .label {
    position: absolute;
    top: 0;
    left: 2px;
  }
  .label p {
    display: flex;
    align-items: center;
    height: 14px;
    line-height: 14px;
    white-space: pre;
  }
  .label p > span { display: flex; align-items: center; }
  .period {
    display: flex;
    align-items: center;
    height: 13px;
    padding-left: 1px;
    line-height: 13px;
    color: #f00;
    white-space: nowrap;
  }

  .quote {
    display: flex;
    flex-direction: column;
    width: 25%;
    min-width: 257px;
    font: 13px/16px "DejaVu Sans", "Noto Sans CJK SC", sans-serif;
    color: #00ff32;
    border: 1px solid var(--rule);
    border-left: 0;
  }
  .quote h2 {
    height: 16px;
    font-size: 12px;
    text-align: center;
    border-bottom: 1px solid var(--rule);
    color: #80ff00;
  }
  .quote h2 b { color: #fff; font-weight: normal; }
  .quote h2 em { color: #00ff32; font-style: normal; }
  table { width: 100%; border-collapse: collapse; table-layout: fixed; }
  td, th { height: 16px; padding: 0; line-height: 15px; white-space: nowrap; }
  .quotes .c1 { width: 40px; }
  .quotes .c2 { width: 80px; }
  .quotes .c3 { width: 44px; }
  .quotes th { text-align: left; color: #80ff00; font-weight: bold; padding-left: 3px; }
  .quotes th + td ~ th { padding-left: 9px; }
  .quotes td { text-align: right; }
  .quotes td:last-child { padding-right: 4px; }
  .tall th, .tall td { height: 18px; }
  .line { border-bottom: 1px solid var(--rule); }
  .green { border-bottom: 2px solid #00ff32; }

  .depthwrap { display: flex; flex: 1; }
  .depth { flex: 1; align-self: flex-start; }
  .depth .d1 { width: 50px; }
  .depth .d2 { width: 52px; }
  .depth .px { padding-left: 2px; }
  .depth .vol { text-align: right; }
  .depth .bar { padding-left: 9px; text-align: right; }
  .bar div { height: 16px; line-height: 15px; border: 1px solid #00ff32; }
  .bar .full { background: #00ff32; }
  .scroll { display: flex; flex-direction: column; width: 13px; margin-left: 1px; }
  .scroll button { height: 13px; border: 1px solid var(--rule); }
  .scroll svg { display: block; margin: 0 auto; }
  .track {
    flex: 1;
    border: 1px solid var(--rule);
    background: repeating-linear-gradient(#9090c8 0 1px, #000080 1px 2px);
  }
  .tabs { display: flex; height: 15px; border-top: 1px solid var(--rule); padding-right: 4px; }
  .tabs button {
    position: relative;
    flex: 1;
    font: bold 13px/14px var(--cjk);
  }
  .tabs button::before, .tabs button::after {
    content: "";
    position: absolute;
    top: 0;
    left: 1px;
    height: 14px;
    border-left: 1px solid var(--rule);
    transform: skewX(20deg);
  }
  .tabs button::after { left: auto; right: 1px; transform: skewX(-20deg); }
  .tabs .sel { color: #ff8040; }

  .status {
    display: flex;
    height: 24px;
    border-top: 3px solid #f4f4ee;
    background: var(--navy);
    font: 13px/20px "DejaVu Sans", "Noto Sans CJK SC", sans-serif;
    white-space: nowrap;
  }
  .index { display: flex; flex: 1; gap: 4px; padding-left: 8px; }
  .r { color: #ff0000; }
  .k { color: #20ff80; }
  .name { font-weight: bold; }
  .gauge {
    width: 60px;
    height: 14px;
    margin-top: 4px;
    background:
      linear-gradient(90deg, #f00 35px, #00ff32 35px) 0 0 / 100% 7px no-repeat,
      repeating-linear-gradient(90deg, #00ff32 0 4px, #000080 4px 8px) 0 8px / 100% 6px no-repeat;
  }
  .cell {
    border-left: 1px solid var(--rule);
    color: #20ff60;
    font: 12px/22px "DejaVu Sans", "Noto Sans CJK SC", sans-serif;
  }
  .cell.small { width: 22px; padding: 2px; }
  .cell.pair { width: 66px; }
  .cell.time { width: 74px; }

  .taskbar {
    display: flex;
    align-items: center;
    height: 30px;
    color: #fff;
    background: linear-gradient(#4a8cf0, #2460dc 15%, #245edc 85%, #1a48b0);
  }
  .start {
    display: flex;
    align-items: center;
    gap: 6px;
    width: 97px;
    height: 30px;
    padding-left: 10px;
    font: italic 18px/26px var(--cjk);
    background: linear-gradient(#6cc06c, #3c923c 20%, #3a9a3a 80%, #2a702a);
    border-radius: 0 12px 12px 0;
  }
  .quick { display: flex; align-items: center; gap: 7px; width: 101px; padding-left: 12px; }
  .quick span { margin: 0 0 10px 4px; font-size: 14px; color: #b8d0ff; }
  .task {
    display: flex;
    align-items: center;
    gap: 4px;
    width: 50px;
    height: 25px;
    margin-right: 2px;
    padding-left: 8px;
    border-radius: 3px;
    background: linear-gradient(#6a9ff5, #3c7ff0 20%, #3a78e8);
    font-size: 12px;
  }
  .task.hot { background: #e07a10; font-size: 14px; gap: 3px; color: #ffd890; }
  .task .drop { border-top-color: #fff; }
  .spin { display: flex; flex-direction: column; gap: 2px; margin: 0 10px 0 19px; }
  .spin button { width: 15px; height: 13px; border: 1px solid #1c48a8; background: #3c78e8; }
  .spin svg { display: block; margin: 0 auto; }
  .desk { margin-left: 8px; color: #a8c4f8; text-decoration: none; }
  .more { margin: 0 0 8px 8px; flex: 1; color: #b8d0ff; font-size: 14px; }
  .tray {
    display: flex;
    align-items: center;
    gap: 2px;
    height: 30px;
    padding-right: 16px;
    background: linear-gradient(#3cc0f8, #129af0 15%, #1290e8 85%, #0d70c0);
  }
  .expand {
    width: 18px;
    height: 18px;
    margin-left: -8px;
    border: 1px solid #9cd4ff;
    border-radius: 9px;
    background: #2a8ce8;
  }
  .expand svg { display: block; }
  .tray .space { width: 16px; }
  .tray time { margin-left: 8px; font-size: 12px; }
</style>
